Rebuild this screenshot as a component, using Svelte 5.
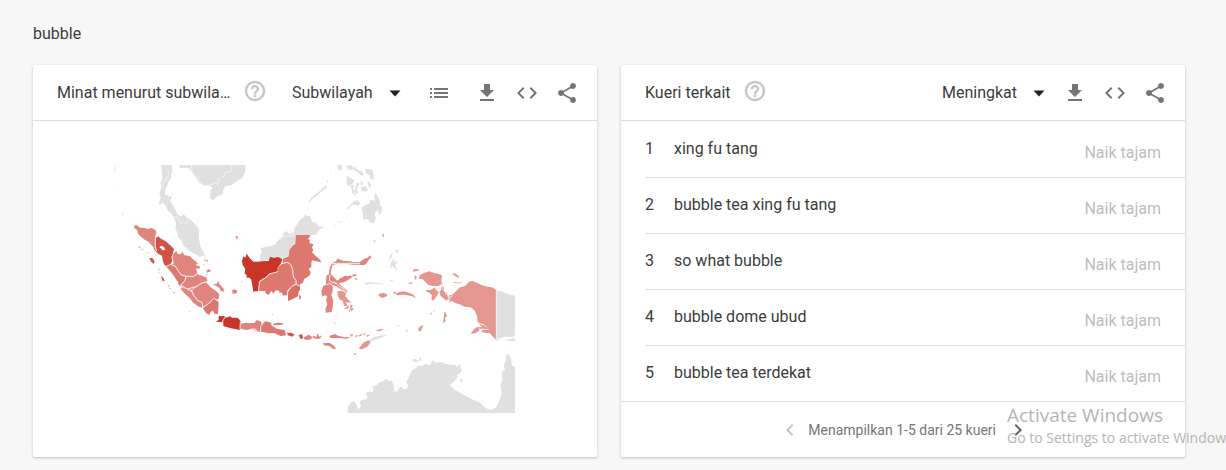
<script>
  const queries = [
    'xing fu tang',
    'bubble tea xing fu tang',
    'so what bubble',
    'bubble dome ubud',
    'bubble tea terdekat'
  ];
  let region = $state('Subwilayah');
  let order = $state('Meningkat');

  // Each sheet of the map has its own origin; fills run from no data to the highest interest.
  const sheets = [
    {
      x: -42, y: -30,
      shapes: [
        ['none', 'M183 30H215L216 48 213 62 214 70 206 80 201 94 196 102 195 121 203 119 204 125 214 123 215 128 210 136 218 150 226 162 232 178 242 184 251 178 262 190 275 197 282 204 294 218 298 226 296 246 299 262 302 275 309 288 315 305 307 302 300 306 285 296 270 290 257 277 249 270 246 258 234 246 230 228 226 222 228 204 222 190 214 176 204 167 196 151 186 142 180 152 176 144 182 128 178 114 184 98 182 82 187 74 186 52Z'],
        ['none', 'M236 30H438L434 54 426 70 410 78 395 90 376 94 370 104 368 118 352 124 338 136 331 130 330 108 338 98 330 92 310 90 296 82 288 68 276 50 264 38 240 40Z'],
        ['none', 'M45 30L47 34 45 52 43 44ZM45 60l2 3-1 6zM47 88l2 6-2 2zM66 172l4 6-2 3-2-3zM207 187l3 2-2 2zM216 114l3 4-2 3z'],
        ['line', 'M194 30L204 44 206 60 196 78 188 86 189 100M219 183L236 188 242 207 250 200 260 207 264 196M274 30L276 50 290 68 310 91 324 92 344 85 354 88 354 72 372 64 376 52 394 50V30']
      ]
    },
    {
      x: 318, y: -30,
      shapes: [
        ['none', 'M80 298L90 308 98 312 106 320 122 320 120 300 126 294 122 280 142 274 156 272 166 268 176 254 188 246 190 234 200 228 206 236 222 230 222 220 232 208 240 194 250 188 256 178 262 184 270 184 276 200 284 202 292 208 294 214 312 216 300 222 292 232 290 238 276 240 228 240 228 262 214 274 206 302 190 308 176 310 158 305 146 314 120 320 104 322Z'],
        ['line', 'M188 235L196 246 204 240 210 246 214 236 220 244 220 230M214 226L218 244'],
        ['none', 'M265 140L276 126 296 110 312 96 321 90 321 98 306 108 294 120 280 130 268 142ZM263 152l2 12-2 8zM320 76l6 2-4 6zM330 52l4 2-2 5z'],
        ['none', 'M350 30H366L365 46 356 46ZM378 34L394 30 402 40 396 46 384 42ZM402 32L412 44 426 50 432 60 424 62 412 52 402 46ZM436 42L456 44 460 52 462 76 448 70 450 60 438 56ZM380 62L392 70 404 76 396 88 384 94 380 84ZM392 92L402 88 400 102 408 118 398 116ZM410 80L418 86 410 104 414 112 402 124 404 108ZM422 76L430 84 422 92ZM422 98L436 94 444 104 434 110 424 106ZM446 78L454 90 448 100 442 84ZM380 160L394 148 402 138 414 136 420 146 414 152 402 148 392 154 382 164ZM378 182l4 2-2 5zM355 198l8 2-4 4zM340 212l8-2-4 5z'],
        ['none', 'M466 112L474 126 480 138 480 150 486 158 484 174 478 180 474 166 466 170 464 180 468 190 460 206 448 200 444 192 430 194 428 172 424 160 432 152 442 148 450 144 448 136 458 136 466 140 462 126Z'],
        ['none', 'M62 270l4 2-2 4zM434 384L450 382 474 384 474 388 450 386 436 390ZM508 310v10l-3-4z'],
        ['low', 'M488 236l5 3-2 8-4-4zM461 255l4 2-3 4z'],
        ['mid', 'M46 244l6-1 2 6-4 4zM65 378l3 2-2 3z'],
        ['max', 'M80 296L88 308 100 320 112 320 126 319 146 318 150 306 164 308 174 306 188 313 182 326 172 340 174 350 158 356 148 357 140 366 124 374 118 380 116 408 100 410 94 374 88 368 80 368 80 360 74 356 76 342 68 330 66 318 70 304 76 308Z'],
        ['high', 'M228 240H270L268 248 262 252 270 254 268 264 280 268 276 278 280 286 276 292 288 304 300 314 304 322 286 318 278 316 274 320 274 336 266 342 272 352 270 360 260 368 254 370 248 384 240 388 238 396 230 392 228 374 220 366 218 344 212 328 202 322 186 326 186 312 206 304 208 286 216 274 226 266Z'],
        ['high', 'M186 326L202 322 212 328 218 344 220 366 228 376 228 386 216 394 204 406 202 420 190 422 184 412 178 414 178 408 168 406 162 412 162 418 154 408 146 420 136 414 136 422V408H116L118 380 126 372 140 366 148 357 174 350 172 340Z'],
        ['high2', 'M228 388L240 394 240 404 236 410 234 424 218 432 204 438 204 410 216 394ZM239 418l4 6-2 10-4-4z'],
        ['line', 'M188 309L186 326 202 322 212 328 218 344 220 366 228 376 228 388 216 394 204 406 202 420M174 350L148 357 140 366 118 380 116 408M228 388L240 394']
      ]
    },
    {
      x: -12, y: 150,
      shapes: [
        ['mid', 'M74 30L84 32 90 38 104 39 112 42 124 39 136 44 140 54 136 66 136 86 138 108 132 104 130 96 122 88 116 80 104 74 94 66 84 56 82 46 72 38Z'],
        ['strong', 'M138 68L144 64 154 72 166 78 176 86 184 94 192 102 190 112 194 122 184 126 188 136 180 150 168 154 162 148 158 136 156 122 144 116 136 108 136 86ZM148 96L158 106 166 104 162 96 154 92Z'],
        ['mid', 'M194 112L200 108 202 116 212 118 218 110 222 120 232 122 240 124 248 132 256 138 264 146 256 150 270 154 268 162 258 160 262 174 252 184 236 188 226 182 212 178 204 168 198 154 188 150 190 140 186 128Z'],
        ['high', 'M168 154L184 148 200 156 206 170 214 180 228 184 224 198 214 208 212 214 206 210 204 200 196 190 190 180 182 170Z'],
        ['mid', 'M228 186L252 184 262 176 270 180 290 188 292 200 284 200 274 206 260 214 242 226 230 222 214 216 214 208 224 198Z'],
        ['mid', 'M216 218L232 222 244 228 252 242 262 256 278 264 276 278 264 274 248 262 240 250 226 238 212 222Z'],
        ['mid', 'M246 226L262 214 276 204 288 202 298 212 300 216 316 226 328 238 326 252 312 256 302 262 290 270 278 276 276 262 262 256 252 242Z'],
        ['high', 'M278 278L290 270 300 264 312 250 326 260 324 298 314 296 308 286 302 292 298 300 288 294Z'],
        ['mid', 'M308 210L320 206 324 198 328 206 334 214 344 224 342 230 332 228 328 218 318 212ZM366 226l8-3 4 2 4 2-2 8-12 1zM340 222l6 2-4 4z'],
        ['strong', 'M118 128L128 130 134 140 130 147 122 138ZM153 184L160 188 164 198 158 199Z'],
        ['mid', 'M84 94l6 2 2 4-4-1zM92 100l9 5-3 1zM112 110l5 3-4 1zM146 158l3 6-3 3zM148 170l3 2-2 3zM172 207l8 7-3 1zM178 216l5 5-3 2zM190 228l5 6-3 2zM236 288l6 3-3 1zM282 132l6 3-4 4zM288 136l6-2-2 8zM280 146l4 3-3 2zM290 166l7-3 6 4-5 4-8 2zM288 176l4 3-3 2zM237 91l3 2-2 2z'],
        ['low', 'M283 184l3 1-2 2z'],
        ['line', 'M140 52L136 70 136 96 140 108M168 154L184 148 198 156 206 170 214 180 228 184 252 184 262 176 270 180M228 184L224 198 212 210 232 222 260 214 276 204 292 200M232 222L244 228 252 242 262 256 276 262 278 278 290 270 312 250 326 260M192 108L186 128 190 146'],
        ['max', 'M326 302L336 304 342 302 348 308 360 304 366 308 382 308 390 316 394 326 390 334 390 345 376 342 362 340 350 336 340 334 340 322 330 321 318 320 326 314Z'],
        ['line', 'M346 306L340 314 336 324']
      ]
    },
    {
      x: 348, y: 165,
      shapes: [
        ['mid', 'M300 140L306 130 318 124 322 116 328 118 338 122 358 124 372 126 390 126 402 116 412 114 420 106 424 112 416 120 410 130 402 136 388 134 370 134 350 132 334 132 318 132 308 136 304 148 302 160 308 168 316 176 322 182 332 174 344 168 356 168 364 166 366 172 358 178 348 184 336 188 326 188 332 196 346 208 354 216 350 218 340 212 326 206 318 198 308 196 308 212 304 226 310 242 308 262 304 276 288 278 286 268 292 252 288 242 292 228 284 226 276 230 274 212 280 198 288 194 288 180 290 166 296 164Z'],
        ['low', 'M322 214L334 212 348 218 346 228 352 236 364 248 348 246 352 258 342 258 338 242 330 240 324 228ZM342 266l14-10 0 8-8 4zM360 256l6-2 2 6-5 2 8 4-6 8-4-6zM356 268l5 2-3 8z'],
        ['low', 'M366 166l6-4 10 2-4 4-10 2zM372 174l5-1 6 6-4 2zM318 286l1 8-2-2zM312 306l3 4-1 6zM433 62l4 1-3 4z'],
        ['line', 'M300 140L302 132 320 130 390 130M300 164L298 182 314 190 322 190M290 194L302 190 308 198 322 202 350 216M312 184L324 196 344 208'],
        ['none', 'M404 187L416 188 430 188 414 192ZM440 190l16 0 2 3-14-1z'],
        ['mid', 'M30 312L48 308 60 310 74 308 80 300 92 304 96 316 90 326 92 336 80 334 66 326 50 330 30 326Z'],
        ['high', 'M98 308L108 304 124 308 124 316 140 326 164 330 168 346 152 348 134 340 116 340 100 336 92 336 92 322Z'],
        ['high', 'M128 312L144 308 160 310 156 314 132 316Z'],
        ['line', 'M31 306L30 328M98 300L100 310 92 320 92 338M64 328L74 326 82 334M64 336L78 336'],
        ['strong', 'M170 338L184 338 194 344 186 350 174 346ZM206 346L216 342 220 354 212 358Z'],
        ['mid', 'M222 352L236 344 246 350 244 358 230 360 222 358ZM248 348l12 2 2-10 6 10 8-4-6 10-10 0-12-2zM278 370L298 368 310 376 318 386 310 388 298 378 282 376ZM298 348L314 342 326 348 346 352 362 350 350 356 328 354 310 354 300 354Z'],
        ['low', 'M358 344l12-2-4 8zM374 348l10-4-4 8zM386 346l10-4 0 4-10 4zM398 342l8-2-2 6zM408 348l6-4 6 2-8 4zM440 330l10-2 12-1-10 6-12 1zM386 386L400 368 416 360 422 366 412 380 396 388ZM368 402l12-4-4 6z'],
        ['none', 'M418 362L430 352 454 346 470 346 452 354 434 360 422 364Z'],
        ['low', 'M125 282l4 1-3 3zM35 184l3 1-2 2z']
      ]
    },
    {
      x: 768, y: 225,
      shapes: [
        ['low', 'M146 116L150 104 164 98 178 94 190 98 206 102 216 106 214 124 218 132 204 138 188 138 174 134 164 124 158 118ZM134 104l6 6-2 10-4-4zM128 90l8-3 14 2-8 4-12 2zM114 130l12-4 2 4-8 2zM246 102l8-2 10 6 4 8-6-2zM250 126l26 2-4 2-24-2z'],
        ['low', 'M168 150L184 150 194 142 198 150 206 156 202 166 196 174 190 182 184 178 186 166 178 158 168 154ZM214 138L222 142 222 152 230 158 232 166 242 166 250 162 258 154 270 142 286 138 296 126 306 122 320 128 336 136 352 140 366 142 380 150V300L370 292 360 280 346 278 334 276 342 262 330 256 322 242 322 230 314 212 302 202 284 200 272 194 258 190 246 184 236 188 242 178 230 182 222 176 212 168 208 156 214 150Z'],
        ['low', 'M302 282L308 272 318 262 330 264 328 272 316 280ZM320 262L350 258 356 262 334 268Z'],
        ['low', 'M68 158l8-4 2 8 8-6 16-2 16 4 12 6 8 10-14-6-12-2-14-2-16 2zM26 162l12-4 12 4 2 6-14 6-12-6zM222 226l2-12 4 6 3 8-6 6 2 10-8 6zM144 268l8-10 8-2-6 14-4 6zM180 222l6-6-2 8zM190 212l4-3-2 6zM82 255l6 1-4 2zM108 270l6 2-4 3z'],
        ['line', 'M214 130L218 146 230 164 242 170M232 160L236 176M228 184L248 166M322 250L342 254 350 262M328 268L356 268'],
        ['none', 'M380 150L394 154 412 162 435 167V302L424 304 412 302 400 298 380 301Z'],
        ['line', 'M379 146V305'],
        ['gap', 'M380 296L408 290 426 292 436 286 436 294 418 298 398 300Z'],
        ['none', 'M76 32l8-4 2 8-6 4zM60 46l8-8-2 14-8 8zM64 64l8-10 2 12 12-2-10 10 6 20-14-16-8 6zM58 120l12 2 4 4-14-2zM404 324l6 2-2 2z']
      ]
    },
    {
      x: 663, y: 495,
      shapes: [
        ['none', 'M38 249V230L44 222 56 212 64 224 72 238 78 230 74 214 86 208 92 210 98 202 92 190 104 184 112 188 116 176 110 170 126 166 130 158 144 154 152 146 164 154 170 152 176 166 178 186 188 184 194 172 202 170 204 178 214 178 220 168 214 156 220 144 224 134 230 122 246 112 248 106 260 108 272 102 286 106 292 90 302 98 320 96 330 102 348 104 364 106 364 112 378 102 376 114 382 120 374 130 366 134 368 142 360 152 344 166 358 178 380 192 400 202 424 214 438 220 448 232 464 240 482 234 490 220 496 204 500 192 496 164 502 150 500 132 502 122 510 120 506 106 512 96 514 76 520 72 528 86 530 104 540 112V249Z'],
        ['none', 'M230 90l12-4 6 6 10-8 2 6-14 6-10 0zM252 80l7 2-5 2zM376 144l8 6-4 8-4-4zM440 212l6 0-4 4z']
      ]
    }
  ];
</script>

{#snippet help()}
  <button class="help" aria-label="Bantuan">
    <svg width="24" height="24" viewBox="0 0 24 24"><path d="M11 18h2v-2h-2v2zm1-16C6.480 2 2 6.480 2 12s4.480 10 10 10 10-4.480 10-10S17.520 2 12 2zm0 18c-4.410 0-8-3.590-8-8s3.590-8 8-8 8 3.590 8 8-3.590 8-8 8zm0-14c-2.210 0-4 1.790-4 4h2c0-1.100.9-2 2-2s2 .9 2 2c0 2-3 1.750-3 5h2c0-2.250 3-2.500 3-5 0-2.210-1.790-4-4-4z" /></svg>
  </button>
{/snippet}

{#snippet actions()}
  <button class="icon" aria-label="Unduh CSV">
    <svg width="24" height="24" viewBox="0 0 24 24"><path d="M19 9h-4V3H9v6H5l7 7 7-7zM5 18v2h14v-2H5z" /></svg>
  </button>
  <button class="icon" aria-label="Sematkan">
    <svg width="24" height="24" viewBox="0 0 24 24"><path d="M9.400 16.600L4.800 12l4.600-4.600L8 6l-6 6 6 6 1.400-1.400zm5.200 0l4.600-4.600-4.600-4.600L16 6l6 6-6 6-1.400-1.400z" /></svg>
  </button>
  <button class="icon" aria-label="Bagikan">
    <svg width="24" height="24" viewBox="0 0 24 24"><path d="M18 16.080c-.76 0-1.440.3-1.960.77L8.910 12.700c.05-.23.09-.46.09-.7s-.04-.47-.09-.7l7.050-4.110c.54.5 1.250.81 2.040.81 1.660 0 3-1.340 3-3s-1.340-3-3-3-3 1.340-3 3c0 .24.04.47.09.7L8.040 9.810C7.500 9.310 6.790 9 6 9c-1.660 0-3 1.340-3 3s1.340 3 3 3c.79 0 1.500-.31 2.040-.81l7.120 4.160c-.05.21-.08.43-.08.65 0 1.610 1.310 2.920 2.920 2.920s2.920-1.310 2.920-2.920-1.310-2.920-2.920-2.920z" /></svg>
  </button>
{/snippet}

{#snippet arrow()}
  <svg class="arrow" width="24" height="24" viewBox="0 0 24 24"><path d="M6.500 9.500L12 15.500 17.500 9.500z" /></svg>
{/snippet}

<main>
  <h1>bubble</h1>
  <div class="cards">
    <section class="card">
      <header>
        <h2>Minat menurut subwilayah</h2>
        {@render help()}
        <label class="pick region">
          <select bind:value={region} aria-label="Wilayah">
            <option>Subwilayah</option>
            <option>Kota</option>
          </select>
          {@render arrow()}
        </label>
        <button class="icon list" aria-label="Tampilkan daftar">
          <svg width="24" height="24" viewBox="0 0 24 24"><path d="M3 7h2v2H3zM3 11h2v2H3zM3 15h2v2H3zM7 7h14v2H7zM7 11h14v2H7zM7 15h14v2H7z" /></svg>
        </button>
        {@render actions()}
      </header>
      <div class="map">
        <svg viewBox="0 0 1203 744" role="img" aria-label="Indonesia">
          {#each sheets as sheet}
            <g transform="translate({sheet.x} {sheet.y})">
              {#each sheet.shapes as [level, d]}
                <path class={level} {d} fill-rule="evenodd" />
              {/each}
            </g>
          {/each}
        </svg>
      </div>
    </section>

    <section class="card">
      <header>
        <h2>Kueri terkait</h2>
        {@render help()}
        <label class="pick order">
          <select bind:value={order} aria-label="Urutan">
            <option>Meningkat</option>
            <option>Teratas</option>
          </select>
          {@render arrow()}
        </label>
        {@render actions()}
      </header>
      <ol>
        {#each queries as query, i}
          <li>
            <span class="rank">{i + 1}</span>
            <a href="#{i + 1}">{query}</a>
            <span class="trend">Naik tajam</span>
          </li>
        {/each}
      </ol>
      <footer>
        <button class="page prev" disabled aria-label="Sebelumnya">
          <svg width="24" height="24" viewBox="0 0 24 24"><path d="M15.410 7.410L14 6l-6 6 6 6 1.410-1.410L10.830 12z" /></svg>
        </button>
        <span>Menampilkan 1-5 dari 25 kueri</span>
        <button class="page" aria-label="Berikutnya">
          <svg width="24" height="24" viewBox="0 0 24 24"><path d="M10 6L8.590 7.410 13.170 12l-4.580 4.590L10 18l6-6z" /></svg>
        </button>
      </footer>
    </section>
  </div>
  <aside>
    <strong>Activate Windows</strong>
    <span>Go to Settings to activate Windows.</span>
  </aside>
</main>

<style>
  :global(body) {
    background: #f7f7f7;
  }
  main {
    position: relative;
    overflow: hidden;
    box-sizing: border-box;
    min-height: 100vh;
    padding: 22px 41px 12px 33px;
    font: 16px/24px Roboto, sans-serif;
    color: #3c3c3c;
  }
  h1,
  h2 {
    margin: 0;
    font-size: 16px;
    font-weight: 400;
    line-height: 24px;
  }
  .cards {
    display: grid;
    grid-template-columns: 1fr 1fr;
    gap: 24px;
    margin-top: 19px;
  }
  .card {
    min-width: 0;
    display: flex;
    flex-direction: column;
    background: #fff;
    border-radius: 2px;
    box-shadow: 0 1px 3px rgba(0, 0, 0, 0.24);
  }
  header {
    display: flex;
    align-items: center;
    height: 55px;
    padding: 0 10px 0 24px;
    border-bottom: 1px solid #dedede;
  }
  h2 {
    flex: 0 1 auto;
    min-width: 0;
    overflow: hidden;
    text-overflow: ellipsis;
    white-space: nowrap;
  }
  button {
    flex: none;
    display: grid;
    place-items: center;
    margin: 0;
    padding: 0;
    border: 0;
    background: none;
    cursor: pointer;
  }
  .help {
    margin: 0 0 4px 12px;
    fill: #c4c4c4;
    stroke: #c4c4c4;
    stroke-width: 0.4;
  }
  .icon {
    width: 40px;
    height: 40px;
    fill: #757575;
  }
  .list {
    margin-right: 8px;
  }
  .pick {
    flex: none;
    display: grid;
    grid-template-columns: 1fr;
    align-items: center;
  }
  .pick > * {
    grid-area: 1 / 1;
  }
  .region {
    width: 115px;
    margin: 0 12px 0 25px;
  }
  .order {
    width: 109px;
    margin-left: auto;
    margin-right: 4px;
  }
  select {
    appearance: none;
    width: 100%;
    height: 32px;
    margin: 0;
    padding: 0;
    border: 0;
    background: none;
    font: inherit;
    color: inherit;
  }
  .arrow {
    justify-self: end;
    fill: #212121;
    pointer-events: none;
  }
  .map {
    flex: 1;
    display: grid;
    place-items: center;
    padding: 40px 25px 40px 23px;
  }
  .map svg {
    width: 100%;
    max-width: 401px;
  }
  .none { fill: #e0e0e0; }
  .low { fill: #e5968f; }
  .mid { fill: #e0857d; }
  .high { fill: #dc7870; }
  .high2 { fill: #d96e65; }
  .strong { fill: #d25247; }
  .max { fill: #c93529; }
  .gap { fill: #fff; }
  .line {
    fill: none;
    stroke: #f8eeee;
    stroke-width: 3;
    stroke-linejoin: round;
  }
  ol {
    margin: 0;
    padding: 1px 0 0 24px;
    list-style: none;
  }
  li {
    display: flex;
    align-items: center;
    height: 53px;
    padding: 0 24px 2px 0;
    border-bottom: 1px solid #dedede;
  }
  li:last-child {
    border-bottom: 0;
  }
  .rank {
    width: 29px;
  }
  a {
    flex: 1;
    color: inherit;
    text-decoration: none;
  }
  .trend {
    padding-top: 8px;
    color: #bdbdbd;
  }
  footer {
    display: flex;
    align-items: center;
    justify-content: flex-end;
    gap: 10px;
    height: 55px;
    padding-right: 159px;
    border-top: 1px solid #dedede;
    font-size: 14px;
    color: #757575;
  }
  .page {
    width: 20px;
    fill: #616161;
  }
  .prev {
    fill: #c4c4c4;
  }
  aside {
    position: absolute;
    top: 402px;
    left: calc(100% - 219px);
    display: flex;
    flex-direction: column;
    font: 14px/20px "Open Sans", sans-serif;
    color: #b4b4b4;
    white-space: nowrap;
    pointer-events: none;
  }
  strong {
    font-size: 19px;
    font-weight: 400;
    line-height: 26px;
  }
</style>
